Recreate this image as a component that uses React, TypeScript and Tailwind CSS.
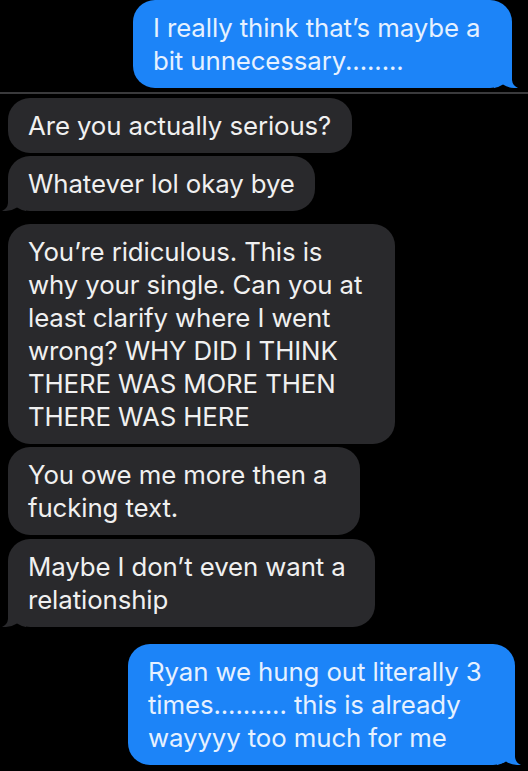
import React from "react";

type Msg = {
  from: "me" | "them";
  lines: string[];
  width: number;
  tail?: boolean;
  gap: number;
};

const messages: Msg[] = [
  { from: "them", lines: ["Are you actually serious?"], width: 344, gap: 0 },
  { from: "them", lines: ["Whatever lol okay bye"], width: 307, gap: 3, tail: true },
  {
    from: "them",
    lines: [
      "You’re ridiculous. This is",
      "why your single. Can you at",
      "least clarify where I went",
      "wrong? WHY DID I THINK",
      "THERE WAS MORE THEN",
      "THERE WAS HERE",
    ],
    width: 387,
    gap: 13,
  },
  { from: "them", lines: ["You owe me more then a", "fucking text."], width: 352, gap: 3 },
  {
    from: "them",
    lines: ["Maybe I don’t even want a", "relationship"],
    width: 367,
    gap: 4,
    tail: true,
  },
];

const Tail = ({ side, color }: { side: "left" | "right"; color: string }) => (
  <svg
    width="24"
    height="24"
    viewBox="0 0 24 24"
    className={`absolute bottom-0 ${side === "left" ? "-left-[6px]" : "-right-[6px] -scale-x-100"}`}
  >
    <path d="M6 2 V16 Q5.5 21.5 0 24 Q9 24.5 15 20.5 Q19 23 24 24 V2 Z" fill={color} />
  </svg>
);

const Bubble = ({ msg }: { msg: Msg }) => {
  const me = msg.from === "me";
  const color = me ? "#1c84f8" : "#29292c";
  return (
    <div
      className={`relative rounded-[22px] px-5 py-[11px] text-[25.8px] leading-[33px] tracking-[-0.1px] ${
        me ? "self-end bg-[#1c84f8] text-[#e6f1ff]" : "self-start bg-[#29292c] text-[#f0f0f0]"
      }`}
      style={{ width: msg.width, marginTop: msg.gap }}
    >
      {msg.tail && <Tail side={me ? "right" : "left"} color={color} />}
      <div className="relative">
        {msg.lines.map((l, i) => (
          <div key={i} className="whitespace-nowrap">
            {l}
          </div>
        ))}
      </div>
    </div>
  );
};

export default function App() {
  return (
    <div
      className="flex h-[771px] w-[528px] flex-col overflow-hidden bg-black"
      style={{ fontFamily: "Inter, 'Open Sans', sans-serif" }}
    >
      <div className="flex flex-col pr-[16px]">
        <Bubble
          msg={{
            from: "me",
            lines: ["I really think that’s maybe a", "bit unnecessary........"],
            width: 379,
            gap: 0,
            tail: true,
          }}
        />
      </div>
      <div className="mt-[4px] h-[2px] w-full bg-[#3a3a3c]" />
      <div className="flex flex-col pl-[8px] pt-[4px]">
        {messages.map((m, i) => (
          <Bubble key={i} msg={m} />
        ))}
      </div>
      <div className="mt-[17px] flex flex-col pr-[13px]">
        <Bubble
          msg={{
            from: "me",
            lines: [
              "Ryan we hung out literally 3",
              "times.......... this is already",
              "wayyyy too much for me",
            ],
            width: 387,
            gap: 0,
            tail: true,
          }}
        />
      </div>
    </div>
  );
}
